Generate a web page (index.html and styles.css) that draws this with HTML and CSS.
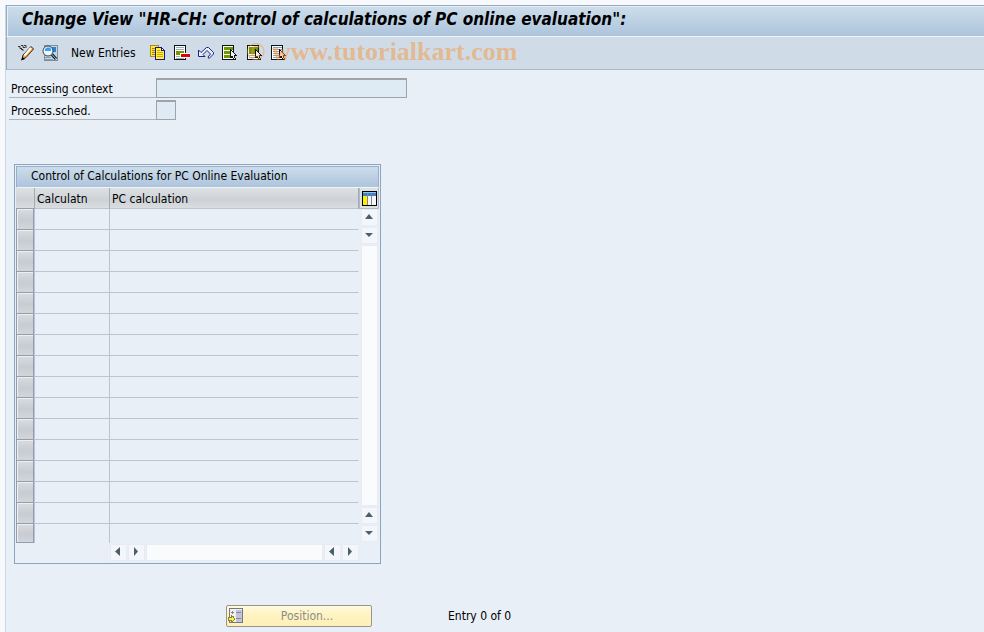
FILE: index.html
```html
<!DOCTYPE html>
<html lang="en">
<head>
    <meta charset="UTF-8">
    <meta name="viewport" content="width=device-width, initial-scale=1.0">
    <title>Change View "HR-CH: Control of calculations of PC online evaluation"</title>
    <link rel="stylesheet" href="styles.css">
</head>
<body>
    <div class="window">
        <header class="titlebar">
            <h1>Change View "HR-CH: Control of calculations of PC online evaluation":</h1>
        </header>

        <div class="toolbar">
            <button type="button" class="tool" aria-label="Display / Change">
                <svg class="icon" viewBox="0 0 16 16">
                    <path d="M0 1.500H2V3.500H4M3 .5H5V2.500H7M6 .5H8V3M3 4.500H5V6" fill="none" stroke="#333"/>
                    <path d="M13 1.500L15.500 4L8 12.500L4 14.500L5 10Z" fill="#ffb04a" stroke="#222"/>
                    <path d="M13 3L6.500 10.500" stroke="#fff" stroke-width="2"/>
                    <path d="M14.500 4.500L7.500 12" stroke="#f07c18"/>
                    <path d="M3 15.500L4.500 12L7 14Z" fill="#000"/>
                </svg>
            </button>
            <button type="button" class="tool" aria-label="Other view">
                <svg class="icon" viewBox="0 0 16 16">
                    <path d="M2 0H16V16H2Z" fill="#7f8e9b"/>
                    <path d="M3 1H15V15H3Z" fill="#c9d4dd"/>
                    <path d="M3 2H14V7H3Z" fill="#1f86e0"/>
                    <path d="M3 12.500H9M3 14.500H11" stroke="#8b9aa7"/>
                    <circle cx="6" cy="6" r="5" fill="#eef8fd" stroke="#33485a"/>
                    <path d="M3 6V4L5 2.500H8L9 4V6Z" fill="#3d9ff0"/>
                    <path d="M10 9.500L14 14" stroke="#10202c" stroke-width="3"/>
                    <path d="M10 9.500L14 14" stroke="#8cc4ec"/>
                </svg>
            </button>
            <button type="button" class="tool tool-text">New Entries</button>
            <button type="button" class="tool" aria-label="Copy as">
                <svg class="icon" viewBox="0 0 16 16" shape-rendering="crispEdges">
                    <path d="M.5 .5H8.500V11.500H.5Z" fill="#ffe640" stroke="#b08c00"/>
                    <path d="M2 3.500H5M2 5.500H5M2 7.500H5M2 9.500H5" stroke="#a58500"/>
                    <path d="M5.500 2.500H11.500L14.500 5.500V14.500H5.500Z" fill="#ffee40" stroke="#1414a0"/>
                    <path d="M11.500 3V5.500H14" fill="#fff" stroke="#1414a0"/>
                    <path d="M7 5.500H10M7 7.500H13M7 9.500H13M7 11.500H13" stroke="#c9ad10"/>
                </svg>
            </button>
            <button type="button" class="tool" aria-label="Delete">
                <svg class="icon" viewBox="0 0 16 16" shape-rendering="crispEdges">
                    <path d="M.5 .5H11.500V14.500H.5Z" fill="#fff" stroke="#111"/>
                    <path d="M2 2.500H10M2 4.500H10M2 11.500H10M2 13.500H10" stroke="#9dabb8"/>
                    <path d="M2 6H10V10H2Z" fill="#6f9800"/>
                    <path d="M6 8H16V13H6Z" fill="#fff"/>
                    <path d="M7 9H16V12H7Z" fill="#e00000"/>
                </svg>
            </button>
            <button type="button" class="tool" aria-label="Undo change">
                <svg class="icon" viewBox="0 0 16 16">
                    <path d="M.5 5V11.500H7L5 9.500L9 5.500L12.500 9L10 12L11 13.500L15.500 9V7.500L10.500 2.500H8.500L3 7.500Z" fill="#eaf0f6" stroke="#20208c"/>
                </svg>
            </button>
            <button type="button" class="tool" aria-label="Select all">
                <svg class="icon" viewBox="0 0 16 16" shape-rendering="crispEdges">
                    <path d="M.5 .5H11.500V14.500H.5Z" fill="#fff" stroke="#111"/>
                    <path d="M2 2H11V5H2ZM2 6H11V9H2ZM2 10H11V13H2Z" fill="#6f9800"/>
                    <path d="M8.500 4.500V12.500L10.500 11.500L11.500 14.500H13.500L12.500 10.500H14.500Z" fill="#eef2f0" stroke="#111"/>
                </svg>
            </button>
            <button type="button" class="tool" aria-label="Select block">
                <svg class="icon" viewBox="0 0 16 16" shape-rendering="crispEdges">
                    <path d="M1.500 .5H12.500V14.500H1.500Z" fill="#fff" stroke="#111"/>
                    <path d="M3 2H12V9H3Z" fill="#6f9800"/>
                    <path d="M3 10.500H10M3 12.500H10" stroke="#9dabb8"/>
                    <path d="M9.500 4.500V12.500L11.500 11.500L12.500 14.500H14.500L13.500 10.500H15.500Z" fill="#eef2f0" stroke="#111"/>
                </svg>
            </button>
            <button type="button" class="tool" aria-label="Deselect all">
                <svg class="icon" viewBox="0 0 16 16" shape-rendering="crispEdges">
                    <path d="M1.500 .5H12.500V14.500H1.500Z" fill="#fff" stroke="#111"/>
                    <path d="M3 2.500H12M3 4.500H12M3 6.500H12M3 8.500H10M3 10.500H10M3 12.500H10" stroke="#8fa0b0"/>
                    <path d="M9.500 4.500V12.500L11.500 11.500L12.500 14.500H14.500L13.500 10.500H15.500Z" fill="#f5e3d0" stroke="#111"/>
                </svg>
            </button>
            <span class="watermark">© www.tutorialkart.com</span>
        </div>

        <main>
            <form class="fields">
                <div class="field">
                    <label for="context">Processing context</label>
                    <input type="text" id="context" class="input-long" readonly>
                </div>
                <div class="field">
                    <label for="sched">Process.sched.</label>
                    <input type="text" id="sched" class="input-short" readonly>
                </div>
            </form>

            <section class="panel">
                <h2 class="panel-title">Control of Calculations for PC Online Evaluation</h2>
                <div class="panel-body">
                    <table class="grid">
                        <thead>
                            <tr>
                                <th class="col-select"></th>
                                <th class="col-calc">Calculatn</th>
                                <th class="col-name">PC calculation</th>
                            </tr>
                        </thead>
                        <tbody id="rows"></tbody>
                    </table>

                    <div class="side">
                        <button type="button" class="config" aria-label="Table settings">
                            <svg viewBox="0 0 15 15" shape-rendering="crispEdges">
                                <path d="M0 0H15V15H0Z" fill="#000"/>
                                <path d="M1 1H14V14H1Z" fill="#f4f6f8"/>
                                <path d="M1 1H14V5H1Z" fill="#3d82c4"/>
                                <path d="M1 1H14V2H1Z" fill="#8ec4ee"/>
                                <path d="M1 5H5V14H1Z" fill="#ffee00"/>
                                <path d="M5.500 2V14M9.500 2V14" stroke="#78889a"/>
                            </svg>
                        </button>
                        <div class="scroll scroll-v">
                            <button type="button" class="arrow" aria-label="Scroll up"><svg viewBox="0 0 15 15"><path d="M3 9L7 4L11 9Z"/></svg></button>
                            <button type="button" class="arrow" aria-label="Line down"><svg viewBox="0 0 15 15"><path d="M3 5L7 9L11 5Z"/></svg></button>
                            <div class="track"></div>
                            <button type="button" class="arrow" aria-label="Line up"><svg viewBox="0 0 15 15"><path d="M3 9L7 4L11 9Z"/></svg></button>
                            <button type="button" class="arrow" aria-label="Scroll down"><svg viewBox="0 0 15 15"><path d="M3 5L7 9L11 5Z"/></svg></button>
                        </div>
                    </div>

                    <div class="scroll scroll-h">
                        <button type="button" class="arrow" aria-label="Scroll left"><svg viewBox="0 0 15 15"><path d="M9 2L4 6.500L9 11Z"/></svg></button>
                        <button type="button" class="arrow" aria-label="Column right"><svg viewBox="0 0 15 15"><path d="M5 2L9 6.500L5 11Z"/></svg></button>
                        <div class="track"></div>
                        <button type="button" class="arrow" aria-label="Column left"><svg viewBox="0 0 15 15"><path d="M9 2L4 6.500L9 11Z"/></svg></button>
                        <button type="button" class="arrow" aria-label="Scroll right"><svg viewBox="0 0 15 15"><path d="M5 2L9 6.500L5 11Z"/></svg></button>
                    </div>
                </div>
            </section>

            <div class="actions">
                <button type="button" class="position-button" disabled>
                    <svg class="icon" viewBox="0 0 16 16" shape-rendering="crispEdges">
                        <path d="M1.500 .5H14.500V14.500H1.500Z" fill="#f0f0f0" stroke="#77777f"/>
                        <path d="M8 2H14V14H8Z" fill="#c3c3dc"/>
                        <path d="M3 4.500H6M4.500 3V6M8 4.500H13M8 10.500H13M3 8.500H6" stroke="#85858f"/>
                        <path d="M.5 9.500H3.500V7.500L7 11L3.500 14.500V12.500H.5Z" fill="#ffee4a" stroke="#8a8030"/>
                    </svg>
                    <span>Position...</span>
                </button>
                <span class="entry">Entry 0 of 0</span>
            </div>
        </main>
    </div>

    <script>
        const ROW_COUNT = 16;
        const rows = document.getElementById('rows');

        for (let i = 1; i <= ROW_COUNT; i++) {
            const row = document.createElement('tr');
            row.innerHTML = `
                <td class="col-select"><button type="button" class="row-button" aria-label="Select row ${i}"></button></td>
                <td class="col-calc"></td>
                <td class="col-name"></td>
            `;
            rows.appendChild(row);
        }
    </script>
</body>
</html>
```

FILE: styles.css
```css
* {
    box-sizing: border-box;
}
body {
    margin: 0;
    padding: 5px 0 0 5px;
    min-height: 100vh;
    display: flex;
    background-color: #f7f9fc;
    font-family: Tahoma, "DejaVu Sans Condensed", "DejaVu Sans", sans-serif;
    font-size: 12px;
    line-height: 16px;
    color: #000;
}
button, input {
    font: inherit;
    color: inherit;
    margin: 0;
    padding: 0;
}
.window {
    flex: 1;
    border-left: 1px solid #ccd5e3;
    background-color: #e8eff6;
}
.titlebar {
    height: 32px;
    padding: 3px 15px;
    border-top: 1px solid #98a9c0;
    border-left: 1px solid #98a9c0;
    border-bottom: 1px solid #eef4f9;
    background: linear-gradient(#cddeeb, #adc4dc);
    box-shadow: inset 1px 1px #e6eff7;
}
h1 {
    margin: 0;
    font-size: 17px;
    line-height: 20px;
    font-weight: bold;
    font-style: italic;
    white-space: nowrap;
}
.toolbar {
    position: relative;
    display: flex;
    align-items: center;
    gap: 8px;
    height: 33px;
    padding: 0 11px 1px;
    border-left: 1px solid #98a9c0;
    border-bottom: 1px solid #a9b8ca;
    background-color: #cfdce7;
}
.tool {
    display: flex;
    border: none;
    background: none;
    cursor: pointer;
}
.tool-text {
    padding: 0 6px 0 5px;
}
.icon {
    display: block;
    width: 16px;
    height: 16px;
}
.watermark {
    position: absolute;
    left: 239px;
    top: 0;
    font-family: "Liberation Serif", serif;
    font-size: 26px;
    line-height: 30px;
    font-weight: bold;
    color: rgba(245, 150, 60, 0.5);
    white-space: nowrap;
    pointer-events: none;
}
main {
    padding: 8px 3px 5px;
}
.fields {
    display: flex;
    flex-direction: column;
    gap: 2px;
}
.field {
    display: flex;
    height: 20px;
}
.field label {
    width: 147px;
    padding: 3px 2px 0;
    border-bottom: 1px solid #b0b5ba;
}
.field input {
    border: 1px solid #a0a4a8;
    border-top-width: 2px;
    background-color: #deeaf4;
    outline: none;
}
.input-long {
    width: 251px;
}
.input-short {
    width: 20px;
}
.panel {
    width: 367px;
    margin: 44px 0 0 5px;
    padding: 1px;
    border: 1px solid #8aa5c3;
}
.panel-title {
    margin: 0;
    height: 22px;
    padding: 1px 14px;
    border: 1px solid #9bb0c7;
    border-bottom: 1px solid #eef4f9;
    background: linear-gradient(#ccddeb, #adc4dc);
    font-size: 12px;
    line-height: 16px;
    font-weight: normal;
}
.panel-body {
    display: grid;
    grid-template-columns: 1fr 20px;
    padding-bottom: 2px;
}
.grid {
    width: 100%;
    table-layout: fixed;
    border-collapse: separate;
    border-spacing: 0;
}
.grid th {
    height: 21px;
    padding: 1px 2px 0;
    border-right: 1px solid #a3abb5;
    border-bottom: 1px solid #bac5d1;
    background: linear-gradient(#dde1e3, #ced2d8 60%, #dbdedf);
    font-weight: normal;
    text-align: left;
}
.grid td {
    height: 21px;
    padding: 0;
    border-right: 1px solid #bac5d3;
    border-bottom: 1px solid #bac5d3;
}
.grid td.col-name {
    border-right-color: transparent;
}
.grid tr:last-child td {
    height: 19px;
    border-bottom: none;
}
.grid th:first-child {
    border-bottom-color: #909eb0;
}
.grid thead th {
    height: 21px;
    border-bottom-style: solid;
}
.col-select {
    width: 19px;
}
.col-calc {
    width: 75px;
}
.grid td.col-select {
    border-bottom: none;
}
.row-button {
    display: block;
    width: 18px;
    height: 21px;
    border: 1px solid #909eb0;
    border-top: none;
    background: linear-gradient(#d9dcdf, #c7ccd3 55%, #d3d6d9);
    box-shadow: inset 1px 1px #edf0f3;
}
.grid tr:last-child .row-button {
    height: 19px;
}
.side {
    display: flex;
    flex-direction: column;
}
.config {
    display: flex;
    align-items: center;
    justify-content: center;
    height: 21px;
    border: 1px solid #b0b8c2;
    border-top: none;
    background-color: #dde1e5;
}
.config svg {
    display: block;
    width: 15px;
    height: 15px;
}
.scroll {
    display: flex;
    gap: 3px;
}
.scroll-v {
    flex: 1;
    flex-direction: column;
    padding: 1px 2px 2px 3px;
}
.scroll-h {
    margin-left: 95px;
    padding: 2px 1px 0 0;
}
.arrow {
    width: 15px;
    height: 15px;
    border: none;
    background-color: #f3f7fb;
    box-shadow: 0 0 0 1px #e8ecf2;
}
.arrow svg {
    display: block;
    width: 15px;
    height: 15px;
    fill: #4d5f6b;
}
.track {
    flex: 1;
    background-color: #fafbfc;
    box-shadow: 0 0 0 1px #e8ecf2;
}
.actions {
    display: flex;
    align-items: center;
    gap: 76px;
    margin: 41px 0 0 217px;
}
.position-button {
    display: flex;
    align-items: center;
    width: 146px;
    height: 22px;
    padding: 0 1px;
    border: 1px solid #96968f;
    border-radius: 2px;
    background: linear-gradient(#fffbe0, #fff3c2 40%, #fff0b8);
    color: #8c8c8c;
}
.position-button span {
    flex: 1;
    text-align: center;
}
```
